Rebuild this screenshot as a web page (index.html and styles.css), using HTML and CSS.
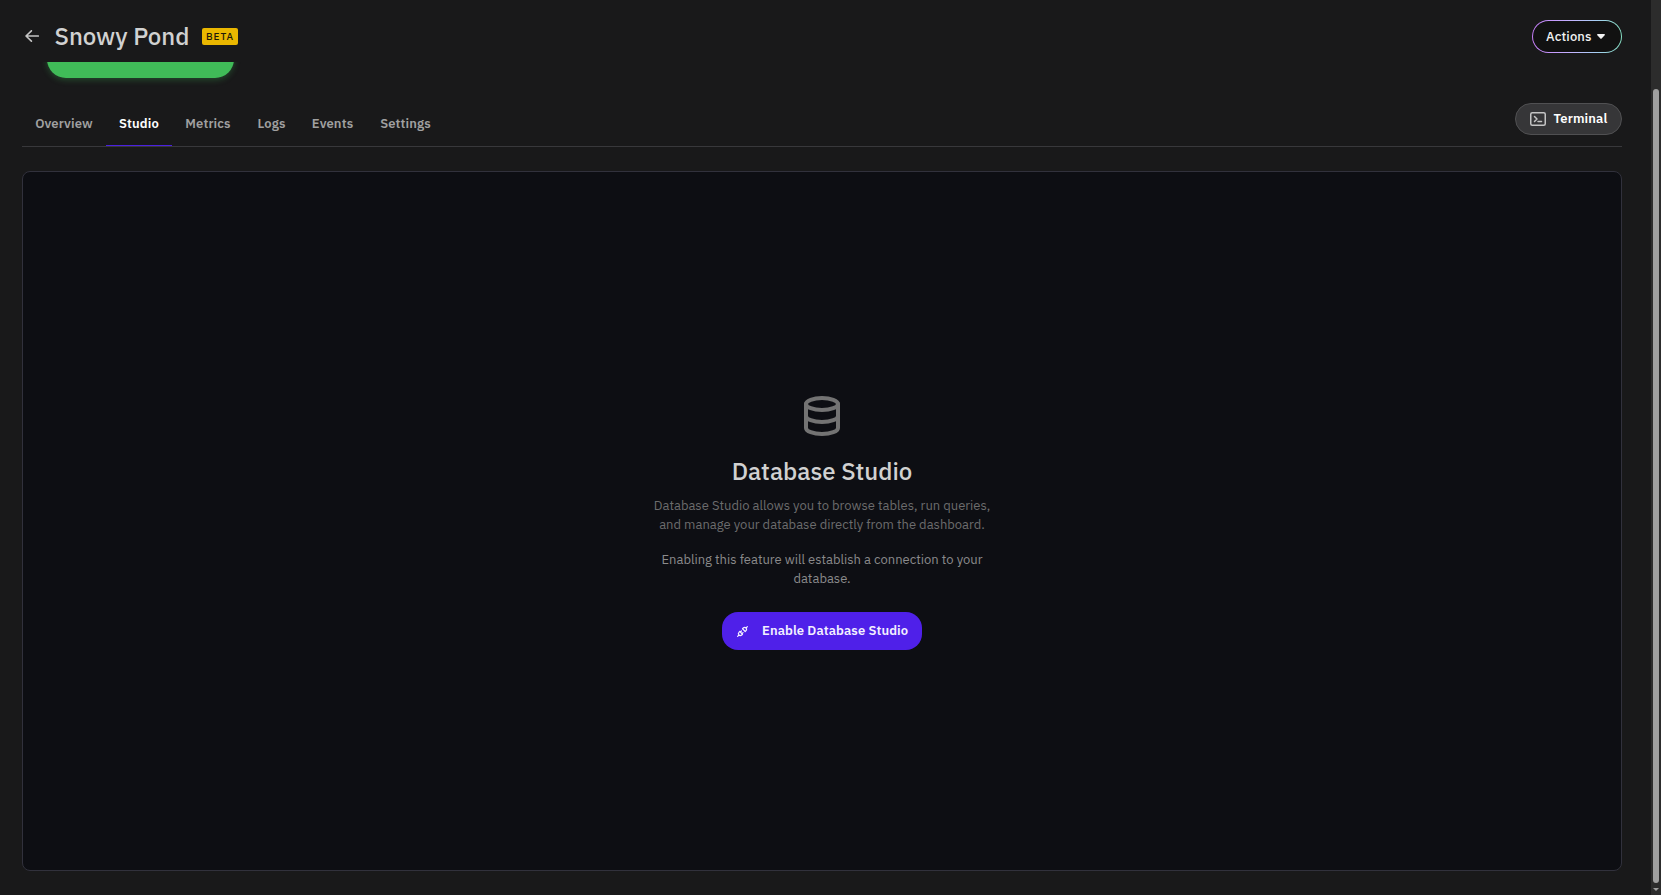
FILE: index.html
```html
<!DOCTYPE html>
<html lang="en">
<head>
  <meta charset="UTF-8" />
  <meta name="viewport" content="width=device-width, initial-scale=1.0"/>
  <title>Snowy Pond – Studio</title>
  <link rel="stylesheet" href="styles.css">
</head>
<body>

<div class="page">
  <header class="topbar">
    <a class="back" href="#" aria-label="Back">
      <svg width="14" height="12" viewBox="0 0 14 12"><path d="M13.3 6H1M6.4 .8 1 6l5.4 5.2"/></svg>
    </a>
    <h1>Snowy Pond</h1>
    <span class="badge">BETA</span>
    <button class="actions">
      <span>Actions</span>
      <svg width="8" height="5" viewBox="0 0 8 5"><path d="M.8 0h6.4c.7 0 1 .7.5 1.2L4.6 4.6a.8.8 0 0 1-1.2 0L.3 1.2C-.2.7.1 0 .8 0z"/></svg>
    </button>
  </header>

  <div class="hero">
    <div class="connect"></div>
  </div>

  <nav class="tabs">
    <a class="tab overview" href="#">Overview</a>
    <a class="tab studio active" href="#">Studio</a>
    <a class="tab metrics" href="#">Metrics</a>
    <a class="tab logs" href="#">Logs</a>
    <a class="tab events" href="#">Events</a>
    <a class="tab settings" href="#">Settings</a>
    <button class="terminal">
      <svg width="16" height="14" viewBox="0 0 16 14"><rect x=".75" y=".75" width="14.5" height="12.5" rx="1.5"/><path d="M4.5 4.5 7 7 4.5 9.5M8 9.5h3.5"/></svg>
      <span>Terminal</span>
    </button>
  </nav>

  <main class="panel">
    <svg class="db-icon" width="48" height="48" viewBox="0 0 24 24">
      <ellipse cx="12" cy="6" rx="8" ry="3"/>
      <path d="M4 6v6a8 3 0 0 0 16 0V6"/>
      <path d="M4 12v6a8 3 0 0 0 16 0v-6"/>
    </svg>
    <h2>Database Studio</h2>
    <p class="desc">Database Studio allows you to browse tables, run queries,<br>and manage your database directly from the dashboard.</p>
    <p class="note">Enabling this feature will establish a connection to your<br>database.</p>
    <button class="enable">
      <svg width="13" height="13" viewBox="0 0 24 24">
        <path d="m7 12 5 5-1.5 1.5a3.5 3.5 0 1 1-5-5zM17 12l-5-5 1.5-1.5a3.5 3.5 0 1 1 5 5zM3 21l2.5-2.5M18.5 5.5 21 3M10 11l-2 2M13 14l-2 2"/>
      </svg>
      <span>Enable Database Studio</span>
    </button>
  </main>
</div>

<div class="scrollbar">
  <div class="thumb"></div>
  <div class="arrow"></div>
</div>

</body>
</html>
```

FILE: styles.css
```css
* {
  box-sizing: border-box;
}
body {
  display: flex;
  margin: 0;
  height: 895px;
  overflow: hidden;
  background: #19191a;
  color: #d1d1d1;
  font-family: "IBM Plex Sans", Roboto, sans-serif;
  font-size: 13px;
}
a {
  color: inherit;
  text-decoration: none;
}
button {
  font: inherit;
  cursor: pointer;
}
svg {
  display: block;
  flex: none;
  fill: none;
  stroke: currentColor;
  stroke-linecap: round;
  stroke-linejoin: round;
}
.page {
  flex: 1;
  padding: 0 29px 0 22px;
}
.topbar {
  display: flex;
  align-items: center;
  height: 62px;
  padding: 11px 0 0 3px;
}
.back {
  padding-bottom: 1px;
  color: #c4c4c4;
  stroke-width: 1.6;
}
h1 {
  margin: 0 0 0 15.5px;
  padding-bottom: 2px;
  width: 134px;
  font-size: 24px;
  font-weight: 500;
  line-height: 32px;
  white-space: nowrap;
}
.badge {
  margin-left: 13.5px;
  width: 36px;
  height: 17px;
  border-radius: 2px;
  background: #eab700;
  color: #1f1a08;
  font-size: 10px;
  font-weight: 500;
  line-height: 17px;
  letter-spacing: 1px;
  text-align: center;
}
.actions {
  display: flex;
  align-items: center;
  gap: 6px;
  margin-left: auto;
  width: 90px;
  height: 33px;
  padding: 0 0 0 13px;
  border: 1px solid transparent;
  border-radius: 17px;
  background: linear-gradient(#111, #111) padding-box, linear-gradient(90deg, #c77dfa, #c3b5ff 45%, #a8cdf5 70%, #86e0c4) border-box;
  color: #f2f2f2;
  font-weight: 500;
  letter-spacing: 0.13px;
}
.actions svg {
  margin-left: -0.5px;
  fill: currentColor;
  stroke: none;
}
.hero {
  height: 41px;
  padding-left: 25px;
  overflow: hidden;
}
.connect {
  width: 187px;
  height: 38px;
  margin-top: -22px;
  border-radius: 20px;
  background: #40bb58;
  box-shadow: 0 2px 6px rgba(64, 187, 88, 0.3);
}
.tabs {
  display: flex;
  height: 44px;
  border-bottom: 1px solid #38383b;
}
.tab {
  padding-top: 12px;
  height: 43px;
  color: #a0a0a0;
  font-weight: 600;
  line-height: 17px;
  letter-spacing: 0.13px;
  text-align: center;
}
.overview { width: 84px; }
.studio { width: 66px; }
.metrics { width: 72px; }
.logs { width: 55px; }
.events { width: 67px; }
.settings { width: 79px; }
.tab.active {
  color: #fff;
  border-bottom: 1px solid #4a20e0;
}
.terminal {
  display: flex;
  align-items: center;
  gap: 7.5px;
  margin-left: auto;
  width: 107px;
  height: 32px;
  padding: 0 0 0 14px;
  border: 1px solid #505052;
  border-radius: 16px;
  background: #363638;
  color: #fff;
  font-weight: 600;
  letter-spacing: 0.13px;
}
.terminal span {
  padding-bottom: 2px;
}
.terminal svg {
  color: #c4c4c4;
  stroke-width: 1.5;
}
.panel {
  display: flex;
  flex-direction: column;
  align-items: center;
  margin-top: 24px;
  height: 700px;
  padding-top: 220px;
  border: 1px solid #31313c;
  border-radius: 8px;
  background: #0d0e13;
  text-align: center;
}
.db-icon {
  color: #737373;
  stroke-width: 2;
}
h2 {
  margin: 15px 0 0;
  font-size: 24px;
  font-weight: 500;
  line-height: 32px;
}
.panel p {
  margin: 0;
  line-height: 19px;
  white-space: nowrap;
}
.panel .desc {
  margin-top: 9px;
  color: #6c6c6d;
}
.panel .note {
  margin-top: 16px;
  color: #8b8b8c;
}
.enable {
  display: flex;
  align-items: center;
  gap: 13px;
  margin-top: 24px;
  width: 200px;
  height: 38px;
  padding: 0 0 0 14px;
  border: none;
  border-radius: 16px;
  background: #4f20e9;
  color: #f3f0ff;
  font-weight: 600;
  letter-spacing: 0.1px;
  white-space: nowrap;
}
.enable span {
  padding-bottom: 2px;
}
.enable svg {
  stroke-width: 2.2;
}
.scrollbar {
  width: 10px;
  padding: 89px 2px 0;
  background: #2c2c2c;
}
.thumb {
  height: 794px;
  border-radius: 3px;
  background: #9f9f9f;
}
.arrow {
  margin-top: 5px;
  border: 3px solid transparent;
  border-top-color: #9f9f9f;
}
```
